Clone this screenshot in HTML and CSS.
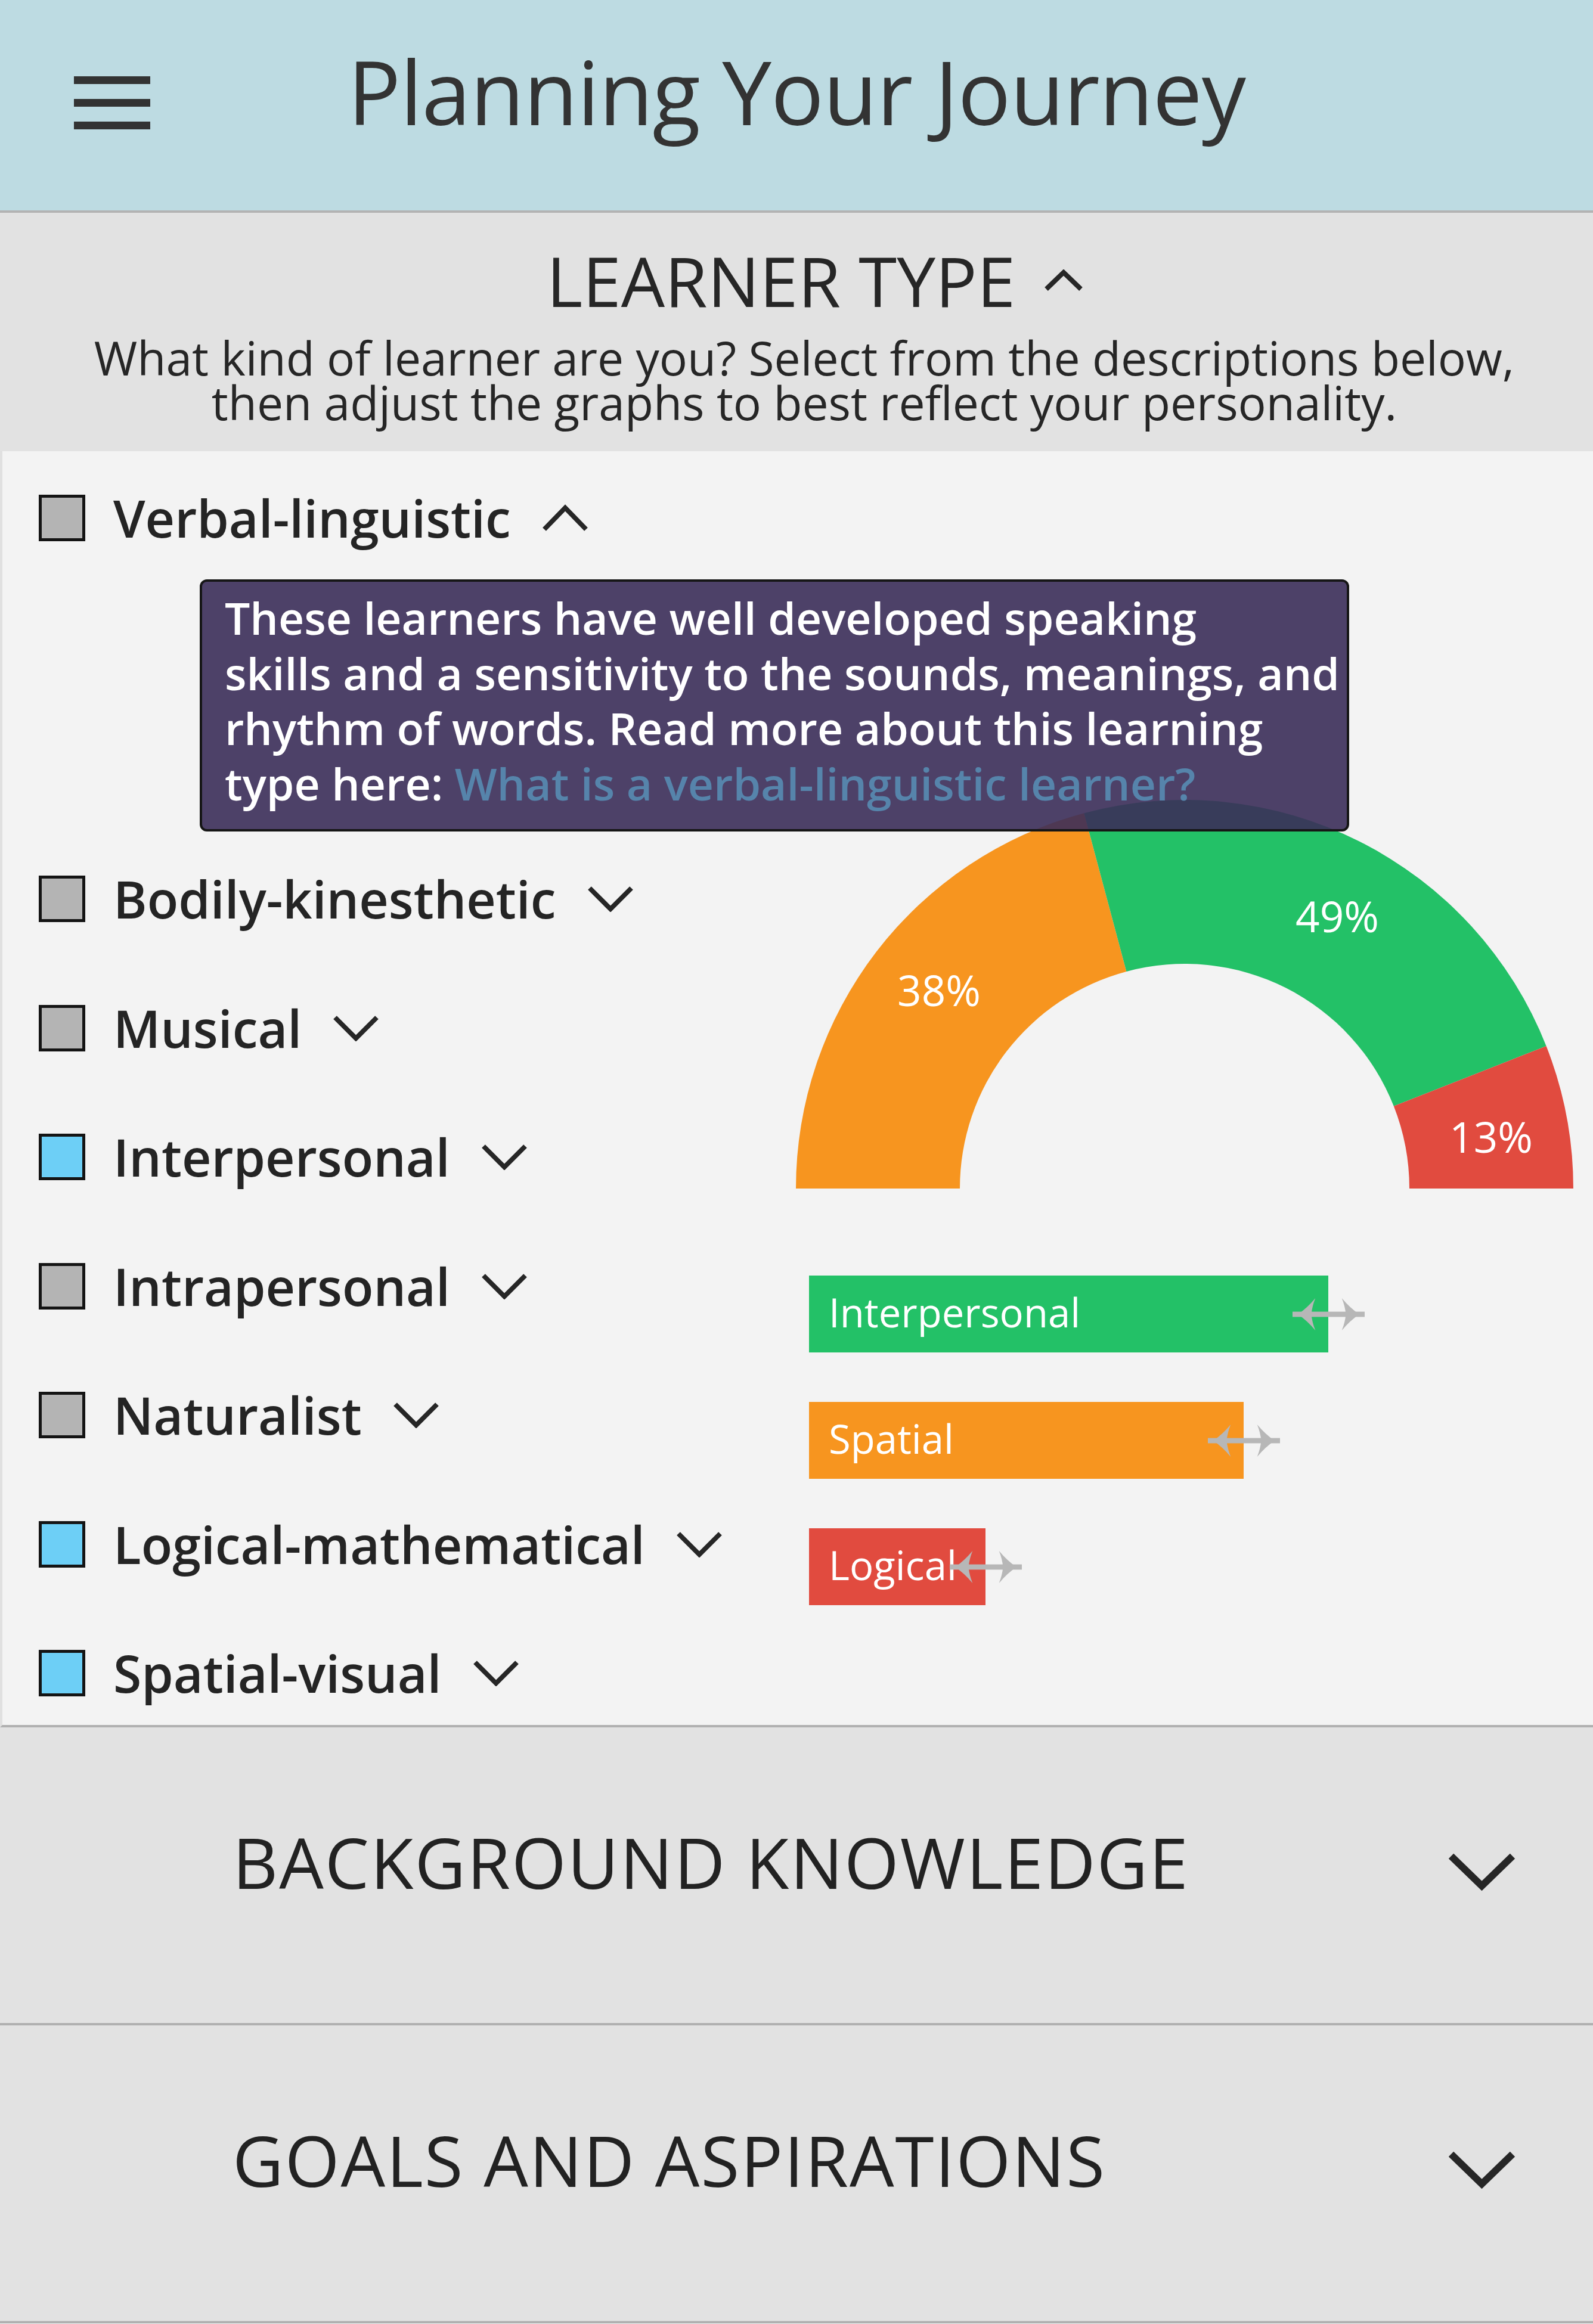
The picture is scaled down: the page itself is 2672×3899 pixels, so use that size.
FILE: index.html
```html
<!DOCTYPE html>
<html lang="en">
<head>
<meta charset="utf-8">
<title>Planning Your Journey</title>
<link rel="stylesheet" href="styles.css">
</head>
<body>
<header class="app-header">
  <div class="menu-cell">
    <button class="menu-btn" aria-label="Menu"><span></span><span></span><span></span></button>
  </div>
  <h1 class="app-title">Planning Your Journey</h1>
  <div class="menu-cell"></div>
</header>

<section class="learner-head">
  <h2 class="head-title">LEARNER TYPE
    <svg class="chev-head" viewBox="0 0 66 36" width="66" height="36"><polyline points="4,33 33,5 62,33" /></svg>
  </h2>
  <p class="intro"><span class="intro-line">What kind of learner are you? Select from the descriptions below,</span><span class="intro-line">then adjust the graphs to best reflect your personality.</span></p>
</section>

<section class="learner-body">
  <div class="types">
    <div class="type-row">
      <span class="check gray"></span>
      <span class="type-name">Verbal-linguistic</span>
      <svg class="chev" viewBox="0 0 78 46" width="78" height="46"><polyline points="4,42 39,6 74,42" /></svg>
    </div>
    <div class="tooltip">
      These learners have well developed speaking<br>
      skills and a sensitivity to the sounds, meanings, and<br>
      rhythm of words. Read more about this learning<br>
      type here: <a class="tip-link" href="#">What is a verbal-linguistic learner?</a>
    </div>
    <div class="type-stack">
      <div class="type-row">
        <span class="check gray"></span>
        <span class="type-name">Bodily-kinesthetic</span>
        <svg class="chev" viewBox="0 0 78 44" width="78" height="44"><polyline points="4,4 39,39 74,4" /></svg>
      </div>
      <div class="type-row">
        <span class="check gray"></span>
        <span class="type-name">Musical</span>
        <svg class="chev" viewBox="0 0 78 44" width="78" height="44"><polyline points="4,4 39,39 74,4" /></svg>
      </div>
      <div class="type-row">
        <span class="check blue"></span>
        <span class="type-name">Interpersonal</span>
        <svg class="chev" viewBox="0 0 78 44" width="78" height="44"><polyline points="4,4 39,39 74,4" /></svg>
      </div>
      <div class="type-row">
        <span class="check gray"></span>
        <span class="type-name">Intrapersonal</span>
        <svg class="chev" viewBox="0 0 78 44" width="78" height="44"><polyline points="4,4 39,39 74,4" /></svg>
      </div>
      <div class="type-row">
        <span class="check gray"></span>
        <span class="type-name">Naturalist</span>
        <svg class="chev" viewBox="0 0 78 44" width="78" height="44"><polyline points="4,4 39,39 74,4" /></svg>
      </div>
      <div class="type-row">
        <span class="check blue"></span>
        <span class="type-name">Logical-mathematical</span>
        <svg class="chev" viewBox="0 0 78 44" width="78" height="44"><polyline points="4,4 39,39 74,4" /></svg>
      </div>
      <div class="type-row">
        <span class="check blue"></span>
        <span class="type-name">Spatial-visual</span>
        <svg class="chev" viewBox="0 0 78 44" width="78" height="44"><polyline points="4,4 39,39 74,4" /></svg>
      </div>
    </div>
  </div>

  <div class="charts">
    <svg class="gauge" viewBox="0 0 1304 654" width="1304" height="654">
      <path class="seg-orange" d="M0,652 A652,652 0 0 1 483.3,22.2 L554.4,287.9 A377,377 0 0 0 275,652 Z"/>
      <path class="seg-green" d="M483.3,22.2 A652,652 0 0 1 1258.6,413 L1002.8,513.8 A377,377 0 0 0 554.4,287.9 Z"/>
      <path class="seg-red" d="M1258.6,413 A652,652 0 0 1 1304,652 L1029,652 A377,377 0 0 0 1002.8,513.8 Z"/>
      <text class="gauge-label" x="240" y="346">38%</text>
      <text class="gauge-label" x="908" y="222">49%</text>
      <text class="gauge-label" x="1166" y="592">13%</text>
    </svg>

    <div class="bars">
      <div class="bar bar-green" style="width:871px">
        <span class="bar-label">Interpersonal</span>
        <svg class="handle" viewBox="0 0 121 56" width="121" height="56"><rect x="0" y="23.6" width="121" height="8.8"/><path d="M9,28 Q24,18 38.3,1 Q33,14 31.5,28 Q33,42 38.3,55 Q24,38 9,28 Z"/><path d="M112,28 Q97,18 82.7,1 Q88,14 89.5,28 Q88,42 82.7,55 Q97,38 112,28 Z"/></svg>
      </div>
      <div class="bar bar-orange" style="width:729px">
        <span class="bar-label">Spatial</span>
        <svg class="handle" viewBox="0 0 121 56" width="121" height="56"><rect x="0" y="23.6" width="121" height="8.8"/><path d="M9,28 Q24,18 38.3,1 Q33,14 31.5,28 Q33,42 38.3,55 Q24,38 9,28 Z"/><path d="M112,28 Q97,18 82.7,1 Q88,14 89.5,28 Q88,42 82.7,55 Q97,38 112,28 Z"/></svg>
      </div>
      <div class="bar bar-red" style="width:296px">
        <span class="bar-label">Logical</span>
        <svg class="handle" viewBox="0 0 121 56" width="121" height="56"><rect x="0" y="23.6" width="121" height="8.8"/><path d="M9,28 Q24,18 38.3,1 Q33,14 31.5,28 Q33,42 38.3,55 Q24,38 9,28 Z"/><path d="M112,28 Q97,18 82.7,1 Q88,14 89.5,28 Q88,42 82.7,55 Q97,38 112,28 Z"/></svg>
      </div>
    </div>
  </div>
</section>

<section class="accordion">
  <h2 class="acc-title">BACKGROUND KNOWLEDGE</h2>
  <svg class="chev-acc" viewBox="0 0 115 66" width="115" height="66"><polyline points="6,6 57.5,56 109,6" /></svg>
</section>
<section class="accordion">
  <h2 class="acc-title">GOALS AND ASPIRATIONS</h2>
  <svg class="chev-acc" viewBox="0 0 115 66" width="115" height="66"><polyline points="6,6 57.5,56 109,6" /></svg>
</section>
</body>
</html>
```

FILE: styles.css
```css
* { box-sizing: border-box; }

html, body {
  margin: 0;
  padding: 0;
}

body {
  width: 2672px;
  background: #f3f3f3;
  font-family: "Open Sans", "Noto Sans", "Liberation Sans", sans-serif;
  color: #262626;
}

/* Header */
.app-header {
  height: 357px;
  background: #bddbe2;
  border-bottom: 4px solid #b3b3b3;
  display: grid;
  grid-template-columns: 1fr auto 1fr;
  align-items: start;
  padding-top: 79px;
}

.menu-cell {
  padding-left: 124px;
}

.menu-btn {
  margin-top: 49px;
  width: 128px;
  padding: 0;
  border: 0;
  background: transparent;
  display: flex;
  flex-direction: column;
  gap: 25px;
}

.menu-btn span {
  display: block;
  width: 128px;
  height: 13px;
  background: #333333;
}

.app-title {
  margin: 0;
  font-size: 148px;
  line-height: 1;
  font-weight: 400;
  color: #333333;
  letter-spacing: -1px;
}

/* Learner type head */
.learner-head {
  height: 400px;
  background: #e2e2e2;
  padding-top: 55px;
  text-align: center;
}

.head-title {
  margin: 0;
  display: inline-flex;
  align-items: center;
  gap: 48px;
  padding-left: 62px;
  font-size: 116px;
  line-height: 1;
  font-weight: 400;
  color: #262626;
}

.chev-head polyline,
.chev polyline,
.chev-acc polyline {
  fill: none;
  stroke: #262626;
}

.chev-head polyline { stroke-width: 8; }

.intro {
  margin: 34px 0 0;
  padding-left: 26px;
  font-size: 78.5px;
  line-height: 75px;
  color: #262626;
  display: flex;
  flex-direction: column;
  align-items: center;
}

.intro-line {
  display: block;
  height: 75px;
  white-space: nowrap;
}

/* Learner body */
.learner-body {
  display: grid;
  grid-template-columns: 1331px 1fr;
  border-left: 4px solid #e0e0e0;
  border-bottom: 4px solid #b0b0b0;
  background: #f3f3f3;
}

.types {
  padding: 73px 0 48px 61px;
}

.type-row {
  height: 78px;
  display: flex;
  align-items: center;
}

.check {
  flex: none;
  width: 78px;
  height: 78px;
  border: 5px solid #141414;
  margin-right: 47px;
}

.check.gray { background: #b4b4b4; }
.check.blue { background: #6dcff6; }

.type-name {
  font-size: 86px;
  line-height: 1;
  font-weight: 600;
  color: #242424;
  font-stretch: 90%;
  white-space: nowrap;
}

.chev {
  flex: none;
  margin-left: 52px;
}

.chev polyline { stroke-width: 8; }

.tooltip {
  position: relative;
  z-index: 2;
  margin: 64px 0 74px 270px;
  width: 1928px;
  height: 423px;
  padding: 14px 20px 0 38px;
  border: 4px solid #161616;
  border-radius: 12px;
  background: rgba(59, 45, 89, 0.9);
  color: #ffffff;
  font-size: 75px;
  line-height: 92.7px;
  font-weight: 600;
  font-stretch: 90%;
  white-space: nowrap;
}

.tip-link {
  color: #5684ab;
  text-decoration: none;
}

.type-stack {
  display: flex;
  flex-direction: column;
  gap: 138.5px;
}

/* Charts */
.charts {
  padding-top: 585px;
}

.gauge {
  display: block;
}

.seg-orange { fill: #f7951f; }
.seg-green { fill: #23c167; }
.seg-red { fill: #e14b3f; }

.gauge-label {
  fill: #ffffff;
  font-family: "Open Sans", "Noto Sans", sans-serif;
  font-size: 71px;
  text-anchor: middle;
}

.bars {
  margin: 144px 0 0 22px;
  display: flex;
  flex-direction: column;
  gap: 83px;
}

.bar {
  position: relative;
  height: 129px;
  display: flex;
  align-items: center;
  padding: 0 0 6px 33px;
}

.bar-green { background: #23c167; }
.bar-orange { background: #f7951f; }
.bar-red { background: #e14b3f; }

.bar-label {
  font-size: 67px;
  line-height: 1;
  color: #ffffff;
  white-space: nowrap;
}

.handle {
  position: absolute;
  right: -61px;
  top: 50%;
  transform: translateY(-50%);
  fill: #b7b7b7;
}

/* Accordions */
.accordion {
  height: 500px;
  background: #e2e2e2;
  border-bottom: 4px solid #b0b0b0;
  display: flex;
  align-items: flex-start;
  padding: 167px 129px 0 390px;
}

.acc-title {
  margin: 0;
  font-size: 118px;
  line-height: 1;
  font-weight: 400;
  letter-spacing: 2px;
  color: #222222;
}

.chev-acc {
  margin-left: auto;
  margin-top: 43px;
}

.chev-acc polyline { stroke-width: 12; }
```
